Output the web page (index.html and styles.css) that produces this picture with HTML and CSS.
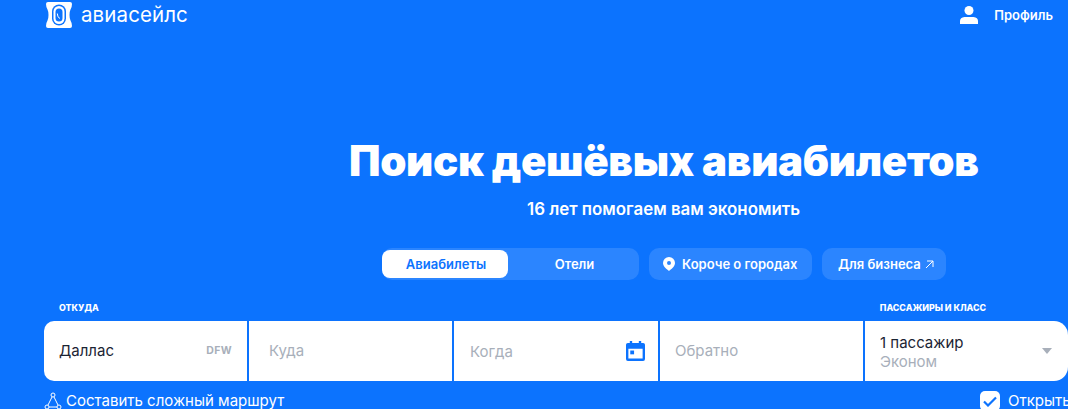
FILE: index.html
```html
<!DOCTYPE html>
<html lang="ru">
<head>
<meta charset="utf-8">
<title>Авиасейлс</title>
<link rel="stylesheet" href="styles.css">
</head>
<body>
<div class="page">
  <header class="header">
    <a class="logo">
      <svg class="logo-icon" width="28" height="28" viewBox="0 0 28 28"><path fill="#fff" d="M3 1h22q2 0 2 2q0 3-1.500 5.500q-1 2-1 5.500t1 5.500q1.500 2.500 1.500 5.500q0 2-2 2H3q-2 0-2-2q0-3 1.500-5.500q1-2 1-5.500t-1-5.500Q1 6 1 3q0-2 2-2z"/><rect x="7" y="3.500" width="14" height="21" rx="7" fill="#0c73fe"/><rect x="8.500" y="5" width="11" height="18" rx="5.500" fill="#fff"/><rect x="10.500" y="7.500" width="7" height="13" rx="3.500" fill="#0c73fe"/><path d="M12.300 12.500q0 4 2.700 5" fill="none" stroke="#fff" stroke-width="1"/></svg>
      <span class="logo-text">авиасейлс</span>
    </a>
    <a class="profile">
      <svg width="18" height="18" viewBox="0 0 18 18"><circle cx="9" cy="4.500" r="4.500" fill="#fff"/><path fill="#fff" d="M0 18v-3q0-3.500 4.500-4h9q4.500 .5 4.500 4v3z"/></svg>
      <span>Профиль</span>
    </a>
  </header>
  <section class="hero">
    <h1 class="title">Поиск дешёвых авиабилетов</h1>
    <p class="subtitle">16 лет помогаем вам экономить</p>
    <nav class="tabs">
      <div class="switch">
        <span class="tab tab-active">Авиабилеты</span>
        <span class="tab">Отели</span>
      </div>
      <a class="pill pill-cities">
        <svg width="12" height="14" viewBox="0 0 12 14"><path fill="#fff" fill-rule="evenodd" d="M6 0a6 6 0 0 1 6 6c0 3.500-4 6.500-6 8C4 12.500 0 9.500 0 6a6 6 0 0 1 6-6zm0 4a2 2 0 1 0 0 4 2 2 0 0 0 0-4z"/></svg>
        Короче о городах
      </a>
      <a class="pill pill-biz">
        Для бизнеса
        <svg width="9" height="9" viewBox="0 0 9 9"><path fill="none" stroke="#fff" stroke-width="1" d="M1 8l7-7M2 1h6v6"/></svg>
      </a>
    </nav>
  </section>
  <div class="labels">
    <span>Откуда</span>
    <span>Пассажиры и класс</span>
  </div>
  <form class="search">
    <div class="cell cell-first"><span class="value">Даллас</span><span class="iata">DFW</span></div>
    <div class="cell"><span class="hint">Куда</span></div>
    <div class="cell cell-date">
      <span class="hint">Когда</span>
      <svg width="19" height="20" viewBox="0 0 20 21"><path fill="#0c73fe" fill-rule="evenodd" d="M4 0h2.500v2h7V0H16v2h2a2 2 0 0 1 2 2v15a2 2 0 0 1-2 2H2a2 2 0 0 1-2-2V4a2 2 0 0 1 2-2h2zM2.500 8v10.500h15V8z"/><rect x="4.500" y="10" width="4" height="4" fill="#0c73fe"/></svg>
    </div>
    <div class="cell cell-return"><span class="hint">Обратно</span></div>
    <div class="cell cell-last">
      <div class="pax"><span class="value">1 пассажир</span><span class="hint">Эконом</span></div>
      <span class="caret"></span>
    </div>
  </form>
  <div class="below">
    <a class="route">
      <svg width="18" height="18" viewBox="0 0 18 18"><g fill="none" stroke="#fff" stroke-width="1"><circle cx="9" cy="3" r="2"/><circle cx="3" cy="15" r="2"/><circle cx="15" cy="15" r="2"/><path d="M8 5l-4 8M10 5l4 8M5 15h8"/></g></svg>
      Составить сложный маршрут
    </a>
    <label class="open">
      <span class="check"><svg width="14" height="11" viewBox="0 0 14 11"><path fill="none" stroke="#0c73fe" stroke-width="2.200" d="M1 5.500l4 4 8-8"/></svg></span>
      Открыть
    </label>
  </div>
</div>
</body>
</html>
```
FILE: styles.css
```css
* { box-sizing: border-box; }
html, body { margin: 0; height: 100%; overflow: hidden; }
body { background: #0c73fe; color: #fff; font-family: Inter, "Noto Sans", sans-serif; }
.page { width: 1068px; height: 409px; overflow: hidden; }
.header { display: flex; justify-content: space-between; align-items: flex-start; height: 135px; padding: 1px 15px 0 45px; }
.logo { display: flex; align-items: center; gap: 8px; }
.logo-text { font-size: 20.500px; font-weight: 400; letter-spacing: .1px; line-height: 28px; }
.profile { display: flex; align-items: center; gap: 16px; font-size: 13px; font-weight: 600; margin-top: 5px; }
.hero { display: flex; flex-direction: column; align-items: flex-start; padding-left: 349px; }
.title { margin: 0; font-size: 42px; font-weight: 900; line-height: 52px; letter-spacing: -.32px; white-space: nowrap; }
.subtitle { margin: 12px 0 0 178px; font-size: 16.900px; font-weight: 600; line-height: 20px; white-space: nowrap; }
.tabs { display: flex; gap: 10px; margin: 29px 0 0 33px; }
.switch { display: flex; width: 257px; height: 32px; padding: 2px 0; background: #2b85ff; border-radius: 10px; }
.tab { display: flex; align-items: center; justify-content: center; flex: 1; font-size: 13px; font-weight: 600; border-radius: 8px; }
.tab-active { flex: 0 0 126px; padding-left: 2px; background: #fff; color: #0c73fe; }
.tab:last-child { padding-left: 2px; }
.pill { display: flex; align-items: center; height: 32px; background: #2b85ff; border-radius: 10px; font-size: 13px; font-weight: 600; }
.pill-cities { gap: 7px; width: 163px; padding-left: 14px; }
.pill-biz { gap: 4px; width: 124px; padding-left: 16px; }
.labels { display: flex; justify-content: space-between; height: 22px; margin-top: 19px; padding: 0 82px 0 59px; font-size: 8.800px; font-weight: 800; line-height: 17px; text-transform: uppercase; }
.search { display: flex; gap: 2px; height: 60px; margin-left: 44px; }
.cell { display: flex; align-items: center; justify-content: space-between; flex: 0 0 203px; background: #fff; padding: 0 16px 1px 20px; font-size: 15px; }
.cell-first { padding: 0 15px 1px 15px; border-radius: 10px 0 0 10px; }
.cell-date { flex-basis: 204px; padding: 0 13px 0 16px; }
.cell-return { padding-left: 15px; }
.cell-last { padding: 0 16px 0 15px; border-radius: 0 14px 14px 0; }
.value { color: #1b2433; }
.hint { color: #a8afba; }
.iata { color: #a8afba; font-size: 10.500px; font-weight: 700; letter-spacing: .4px; }
.pax { display: flex; flex-direction: column; padding-top: 1px; line-height: 19px; }
.caret { width: 0; height: 0; border-left: 5px solid transparent; border-right: 5px solid transparent; border-top: 6px solid #a8afba; }
.below { display: flex; justify-content: space-between; margin-top: 10px; padding-left: 44px; font-size: 15px; line-height: 20px; white-space: nowrap; }
.route { display: flex; align-items: center; gap: 4px; }
.open { display: flex; align-items: center; gap: 8px; width: 88px; }
.check { display: flex; align-items: center; justify-content: center; flex: none; width: 20px; height: 20px; background: #fff; border-radius: 5px; }
```
